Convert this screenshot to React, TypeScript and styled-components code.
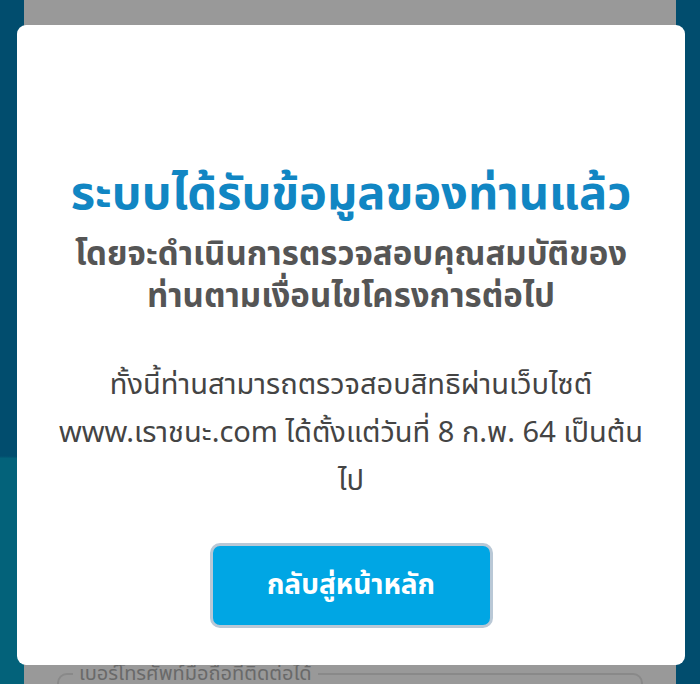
import React from 'react';
import styled, { createGlobalStyle } from 'styled-components';

const GlobalStyle = createGlobalStyle`
  html, body {
    margin: 0;
    padding: 0;
    height: 100%;
  }
  body {
    font-family: "Noto Sans Thai", "Noto Sans", "DejaVu Sans", sans-serif;
    overflow: hidden;
  }
`;

const Page = styled.div`
  height: 684px;
  display: flex;
  justify-content: center;
  padding: 0 24px;
  box-sizing: border-box;
  background:
    radial-gradient(ellipse 320px 228px at 0 100%, #05a3cb 99%, transparent 100%),
    #0380b7;
`;

const FormCard = styled.div`
  flex: 1;
  background: #ffffff;
  display: flex;
  flex-direction: column;
  justify-content: flex-end;
  padding: 0 33px;
`;

const Field = styled.div`
  position: relative;
  height: 40px;
  margin-bottom: -33px;
  border: 2px solid #e4e4e4;
  border-radius: 10px;
`;

const FieldLabel = styled.span`
  position: absolute;
  top: -14px;
  left: 14px;
  padding: 0 6px;
  background: #ffffff;
  color: #b0b0b0;
  font-size: 20px;
  line-height: 26px;
  white-space: nowrap;
`;

const Backdrop = styled.div`
  position: fixed;
  inset: 0;
  background: rgba(0, 0, 0, 0.4);
  display: flex;
  padding: 25px 15px 19px 17px;
  box-sizing: border-box;
`;

const Modal = styled.div`
  flex: 1;
  background: #ffffff;
  border-radius: 9px;
  display: flex;
  flex-direction: column;
  align-items: center;
  padding-top: 142px;
  text-align: center;
`;

const Title = styled.h1`
  margin: 0;
  color: #1186c3;
  font-size: 47px;
  font-weight: 700;
  line-height: 56px;
  white-space: nowrap;
`;

const Subtitle = styled.h2`
  margin: 11px 0 0;
  color: #555555;
  font-size: 33px;
  font-weight: 700;
  line-height: 42px;
`;

const Body = styled.p`
  margin: 43px 0 0;
  color: #444444;
  font-size: 29px;
  font-weight: 400;
  line-height: 48px;
`;

const Line = styled.span`
  display: block;
  white-space: nowrap;
`;

const HomeButton = styled.button`
  margin-top: 38px;
  width: 283px;
  height: 85px;
  box-sizing: border-box;
  border: 3px solid #b9c8d6;
  border-radius: 10px;
  background: #00a6e4;
  color: #ffffff;
  font-family: inherit;
  font-size: 28px;
  font-weight: 700;
  cursor: pointer;
`;

const App = () => {
  return (
    <>
      <GlobalStyle />
      <Page>
        <FormCard>
          <Field>
            <FieldLabel>เบอร์โทรศัพท์มือถือที่ติดต่อได้</FieldLabel>
          </Field>
        </FormCard>
      </Page>
      <Backdrop>
        <Modal>
          <Title>ระบบได้รับข้อมูลของท่านแล้ว</Title>
          <Subtitle>
            <Line>โดยจะดำเนินการตรวจสอบคุณสมบัติของ</Line>
            <Line>ท่านตามเงื่อนไขโครงการต่อไป</Line>
          </Subtitle>
          <Body>
            <Line>ทั้งนี้ท่านสามารถตรวจสอบสิทธิผ่านเว็บไซต์</Line>
            <Line>www.เราชนะ.com ได้ตั้งแต่วันที่ 8 ก.พ. 64 เป็นต้น</Line>
            <Line>ไป</Line>
          </Body>
          <HomeButton>กลับสู่หน้าหลัก</HomeButton>
        </Modal>
      </Backdrop>
    </>
  );
};

export default App;
